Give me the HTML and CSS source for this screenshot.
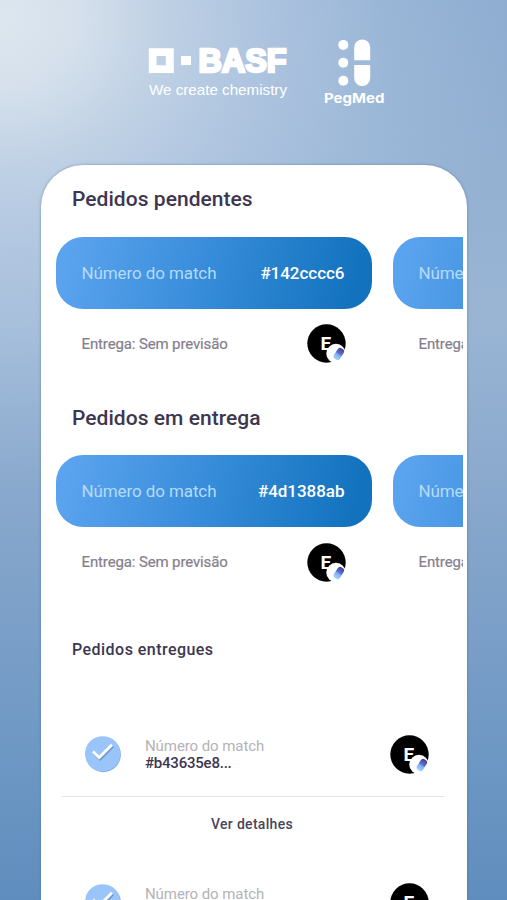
FILE: index.html
```html
<!DOCTYPE html>
<html lang="pt-BR">
<head>
<meta charset="utf-8">
<meta name="viewport" content="width=device-width, initial-scale=1">
<title>PegMed – Pedidos</title>
<link rel="stylesheet" href="styles.css">
</head>
<body>
<svg width="0" height="0" class="defs" aria-hidden="true">
  <defs>
    <linearGradient id="pill" x1="0" y1="0" x2="0" y2="1">
      <stop offset="0" stop-color="#41418f"/><stop offset="0.48" stop-color="#6475cf"/><stop offset="0.56" stop-color="#79adf5"/><stop offset="1" stop-color="#a5d3ff"/>
    </linearGradient>
    <symbol id="avatar" viewBox="0 0 39 39">
      <circle cx="19.500" cy="19.500" r="19.200" fill="#000"/>
      <text x="13.500" y="26" class="avatar-letter">E</text>
      <circle cx="29" cy="29.500" r="9.700" fill="#fff"/>
      <rect x="28.200" y="23.600" width="7" height="12.500" rx="3" fill="url(#pill)" transform="rotate(33 31.500 30.100)"/>
    </symbol>
    <symbol id="check" viewBox="0 0 38 40">
      <circle cx="19.300" cy="20.600" r="17.600" fill="#83afe8"/>
      <circle cx="18.600" cy="19.800" r="17.600" fill="#99c5fa"/>
      <path d="M9.500 18.200 15.700 24.200 28.600 11.300" fill="none" stroke="#7198c4" stroke-width="2.600" transform="translate(.5 .9)"/>
      <path d="M9 17.600 15.200 23.600 28 10.800" fill="none" stroke="#fff" stroke-width="2.800"/>
    </symbol>
  </defs>
</svg>
<div class="screen">
  <header class="brands">
    <svg class="basf" width="140" height="52" viewBox="0 0 140 52" role="img" aria-label="BASF">
      <path fill="#fff" fill-rule="evenodd" d="M.8.300h25v24.700H.8zM8.500 8v9.300h9.300V8z"/>
      <path fill="#fff" d="M33 8h10v9H33z"/>
      <text x="50.500" y="24" class="basf-name" textLength="88" lengthAdjust="spacingAndGlyphs">BASF</text>
      <text x="1" y="46.500" class="basf-tag" textLength="138" lengthAdjust="spacingAndGlyphs">We create chemistry</text>
    </svg>
    <svg class="pegmed" width="64" height="70" viewBox="0 0 64 70" role="img" aria-label="PegMed">
      <g fill="#fff">
        <circle cx="20.300" cy="6.900" r="5"/><circle cx="20.300" cy="24.800" r="5"/><circle cx="20.300" cy="42.700" r="5"/>
        <path d="M31.200 22.300V9.400a8 8 0 0 1 16 0v12.900zM31.200 27h16v13a8 8 0 0 1-16 0z"/>
      </g>
      <text x="1" y="64.500" class="pegmed-name" textLength="60.500" lengthAdjust="spacingAndGlyphs">PegMed</text>
    </svg>
  </header>
  <main class="panel">
    <section class="orders">
      <h2 class="title">Pedidos pendentes</h2>
      <div class="carousel">
        <article class="order">
          <div class="card"><span class="label">Número do match</span><strong class="code">#142cccc6</strong></div>
          <div class="info"><span class="eta">Entrega: Sem previsão</span><svg class="avatar"><use href="#avatar"/></svg></div>
        </article>
        <article class="order">
          <div class="card"><span class="label">Núme</span></div>
          <div class="info"><span class="eta">Entrega</span></div>
        </article>
      </div>
    </section>
    <section class="orders">
      <h2 class="title">Pedidos em entrega</h2>
      <div class="carousel">
        <article class="order">
          <div class="card"><span class="label">Número do match</span><strong class="code">#4d1388ab</strong></div>
          <div class="info"><span class="eta">Entrega: Sem previsão</span><svg class="avatar"><use href="#avatar"/></svg></div>
        </article>
        <article class="order">
          <div class="card"><span class="label">Núme</span></div>
          <div class="info"><span class="eta">Entrega</span></div>
        </article>
      </div>
    </section>
    <section class="delivered">
      <h3 class="subtitle">Pedidos entregues</h3>
      <article class="item">
        <div class="item-row">
          <svg class="check"><use href="#check"/></svg>
          <div class="item-text"><span class="item-label">Número do match</span><strong class="item-code">#b43635e8...</strong></div>
          <svg class="avatar"><use href="#avatar"/></svg>
        </div>
        <div class="details">Ver detalhes</div>
      </article>
      <article class="item">
        <div class="item-row">
          <svg class="check"><use href="#check"/></svg>
          <div class="item-text"><span class="item-label">Número do match</span></div>
          <svg class="avatar"><use href="#avatar"/></svg>
        </div>
      </article>
    </section>
  </main>
</div>
</body>
</html>
```
FILE: styles.css
```css
* { box-sizing: border-box; }
body { margin: 0; overflow: hidden; font-family: Roboto, sans-serif; }
.defs { display: block; }
.screen {
  height: 900px;
  overflow: hidden;
  background:
    radial-gradient(ellipse 520px 460px at 0 20px, rgba(223,232,240,.98) 0, rgba(218,228,238,.93) 15%, rgba(204,218,234,.78) 32%, rgba(194,211,233,.6) 50%, rgba(180,203,230,.3) 75%, rgba(170,198,228,0) 100%),
    linear-gradient(180deg, #8dacd0 0, #94b1d2 180px, #9ab5d4 320px, #84a5cb 540px, #6b96c3 780px, #5f8dbd 900px);
}
.brands { display: flex; height: 165px; padding: 38px 0 0 148px; }
.basf { margin-top: 10px; flex: none; overflow: visible; }
.pegmed { margin-left: 35px; flex: none; }
.basf-name { font: bold 33px "Liberation Sans", sans-serif; fill: #fff; stroke: #fff; stroke-width: 2.600px; }
.basf-tag { font: 14.500px "Liberation Sans", sans-serif; fill: #fff; }
.pegmed-name { font: 700 13px Inter, sans-serif; fill: #fff; }
.panel {
  width: 426px;
  height: 760px;
  margin-left: 41px;
  padding-right: 4px;
  overflow: hidden;
  background: #fff;
  border-radius: 42px 42px 0 0;
  box-shadow: 0 0 3px rgba(75,105,140,.6);
}
.orders { height: 218.5px; }
.title {
  margin: 0;
  height: 71.500px;
  padding: 22px 0 0 31px;
  font-size: 21px;
  line-height: 24px;
  font-weight: 500;
  letter-spacing: .04px;
  color: #3d3650;
}
.carousel { display: flex; gap: 21px; padding-left: 14.500px; overflow: hidden; }
.order { flex: none; width: 316px; }
.card {
  display: flex;
  align-items: center;
  justify-content: space-between;
  height: 72px;
  padding: 0 27px 0 26px;
  border-radius: 27px;
  background: linear-gradient(105deg, #5ba3ef 4%, #358bd8 50%, #1272bd 94%);
}
.label { font-size: 17px; letter-spacing: -.1px; color: #b5daf9; }
.code { font-size: 17px; font-weight: 500; letter-spacing: -.03px; color: #fff; }
.info { display: flex; align-items: center; justify-content: space-between; height: 70px; padding: 0 26px; }
.eta { font-size: 15px; letter-spacing: -.13px; color: #85808d; -webkit-text-stroke: .2px #85808d; }
.avatar { display: block; width: 39px; height: 39px; flex: none; }
.avatar-letter { font: 700 19px Roboto, sans-serif; fill: #fff; }
.subtitle {
  margin: 0;
  height: 110px;
  padding: 38px 0 0 31px;
  font-size: 16px;
  line-height: 20px;
  font-weight: 500;
  letter-spacing: .46px;
  color: #3d3650;
}
.item { width: 382px; height: 148px; margin-left: 21px; }
.item-row { display: flex; align-items: center; height: 85px; padding: 0 15px 0 22px; border-bottom: 1px solid #e4e4e6; }
.check { width: 38px; height: 40px; flex: none; }
.item-text { display: flex; flex-direction: column; flex: 1; height: 34px; margin-left: 23px; }
.item-label { font-size: 15px; line-height: 18px; letter-spacing: -.08px; color: #b4b2b6; }
.item-code { font-size: 15px; line-height: 16px; font-weight: 500; letter-spacing: -.22px; color: #3d3650; }
.details { padding: 17px 2px 0 0; text-align: center; font-size: 14px; line-height: 20px; font-weight: 500; letter-spacing: .3px; color: #4a4459; }
```
